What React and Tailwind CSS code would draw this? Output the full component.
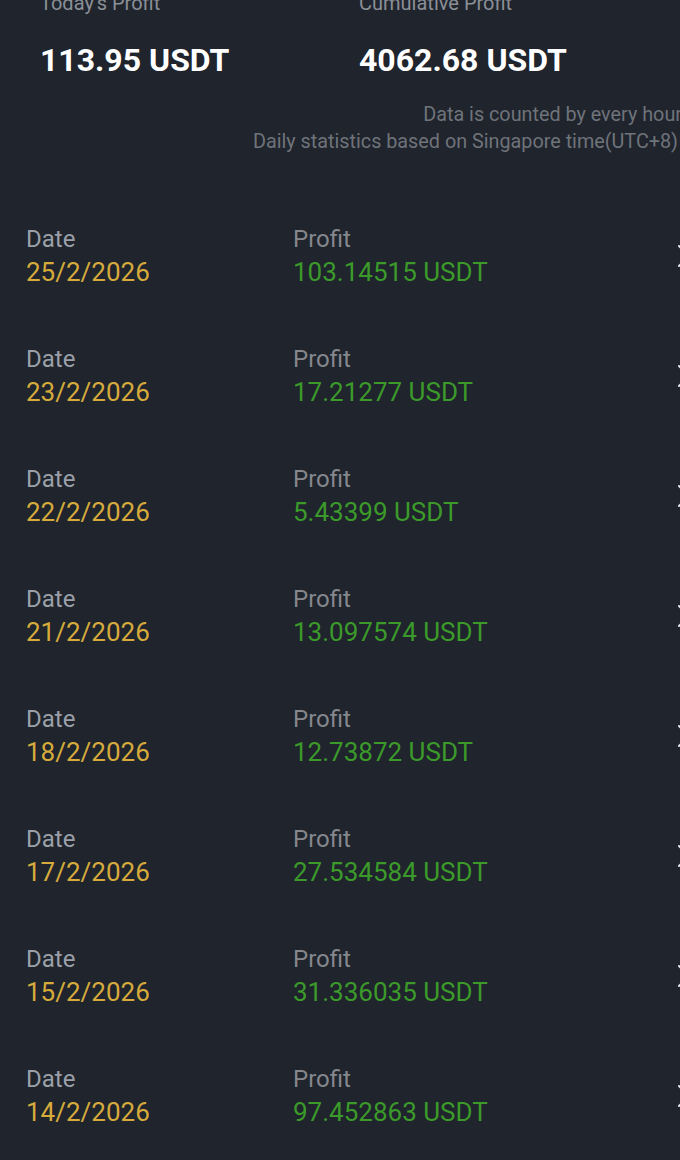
import { ChevronRight } from 'lucide-react'

const rows = [
  { date: '25/2/2026', profit: '103.14515 USDT' },
  { date: '23/2/2026', profit: '17.21277 USDT' },
  { date: '22/2/2026', profit: '5.43399 USDT' },
  { date: '21/2/2026', profit: '13.097574 USDT' },
  { date: '18/2/2026', profit: '12.73872 USDT' },
  { date: '17/2/2026', profit: '27.534584 USDT' },
  { date: '15/2/2026', profit: '31.336035 USDT' },
  { date: '14/2/2026', profit: '97.452863 USDT' },
]

export default function App() {
  return (
    <main className="w-[680px] h-[1160px] overflow-hidden bg-[#1f242d] font-['Roboto',sans-serif]">
      <div className="flex -mt-[10px] pl-[40px]">
        <div className="w-[319px]">
          <p className="text-[20px] leading-[26px] text-[#8b8f96]">Today's Profit</p>
          <p className="mt-[25px] text-[32px] leading-[38px] font-bold text-white">113.95 USDT</p>
        </div>
        <div>
          <p className="text-[20px] leading-[26px] text-[#8b8f96]">Cumulative Profit</p>
          <p className="mt-[25px] text-[32px] leading-[38px] font-bold text-white">4062.68 USDT</p>
        </div>
      </div>

      <div className="mt-[22px] pr-[2px] text-right text-[19.8px] leading-[27px] text-[#6f737a] whitespace-nowrap">
        <p className="-mr-[4px]">Data is counted by every hour</p>
        <p>Daily statistics based on Singapore time(UTC+8)</p>
      </div>

      <div className="mt-[41px]">
        {rows.map((r) => (
          <div key={r.date} className="flex items-center h-[120px] pl-[26px]">
            <div className="w-[267px]">
              <p className="text-[24px] leading-[33px] text-[#9ba0a8]">Date</p>
              <p className="text-[26px] leading-[33px] text-[#d6ab3c]">{r.date}</p>
            </div>
            <div className="flex-1">
              <p className="text-[24px] leading-[33px] text-[#84878c]">Profit</p>
              <p className="text-[26px] leading-[33px] text-[#3c9a2a]">{r.profit}</p>
            </div>
            <ChevronRight className="w-[40px] h-[40px] text-[#e5e7eb] -mr-[24px] shrink-0" strokeWidth={1.2} />
          </div>
        ))}
      </div>
    </main>
  )
}
